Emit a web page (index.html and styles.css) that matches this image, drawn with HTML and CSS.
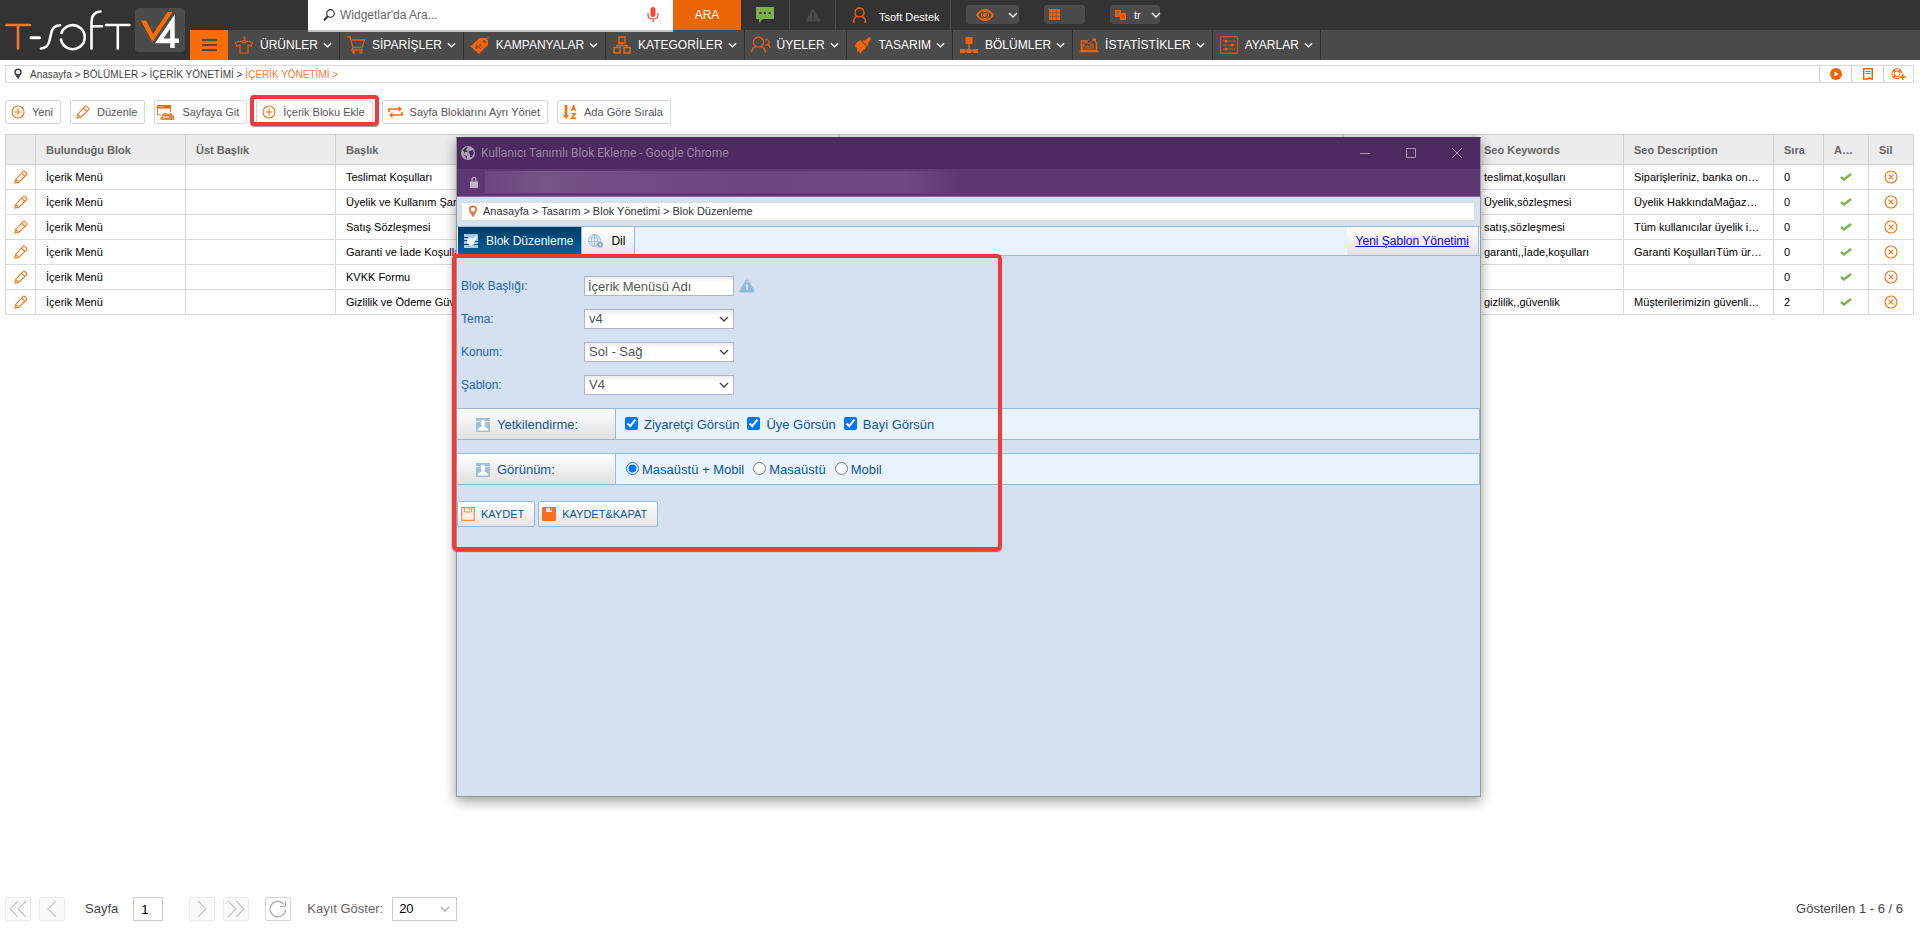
FILE: index.html
```html
<!DOCTYPE html>
<html lang="tr">
<head>
<meta charset="utf-8">
<title>İçerik Yönetimi</title>
<link rel="stylesheet" href="styles.css">
</head>
<body>
<svg class="sprite" aria-hidden="true">
  <symbol id="chev" viewBox="0 0 10 6"><path d="M1 1l4 4 4-4" fill="none" stroke="currentColor" stroke-width="1.4"/></symbol>
  <symbol id="pencil" viewBox="0 0 14 14"><path d="M1 13l.6-3.6L9 1.6q1-1 2 0l1.400 1.400q1 1 0 2L4.600 12.400zM7.500 3.200l3.300 3.300M1.700 9.400l2.900 3" fill="none" stroke="#f57a20" stroke-width="1.100"/></symbol>
  <symbol id="plus" viewBox="0 0 14 14"><circle cx="7" cy="7" r="6" fill="none" stroke="#f57a20" stroke-width="1.200"/><path d="M7 3.500v7M3.500 7h7" stroke="#f57a20" stroke-width="1.200"/></symbol>
  <symbol id="check" viewBox="0 0 12 8"><path d="M1 4l3 2.500L11 1" fill="none" stroke="#7fb24c" stroke-width="2.400"/></symbol>
  <symbol id="del" viewBox="0 0 14 14"><circle cx="7" cy="7" r="6" fill="none" stroke="#f57a20" stroke-width="1.200"/><path d="M4.700 4.700l4.600 4.600M9.300 4.700l-4.600 4.600" stroke="#f57a20" stroke-width="1.200"/></symbol>
  <symbol id="pin" viewBox="0 0 10 13"><path d="M5 12.500C3.500 9 1 7 1 4.500a4 4 0 0 1 8 0C9 7 6.500 9 5 12.500z" fill="currentColor"/><circle cx="5" cy="4.500" r="2.200" fill="#fff"/></symbol>
  <symbol id="person" viewBox="0 0 14 14"><path d="M0 0h14v14H0z" fill="#9dc0dd"/><path d="M7 1.500a2.500 3 0 0 1 2.200 4.200c-.4 1-.8 1.400-.8 2.300 0 1.200 3.800 1.200 4.100 4.500h-11C1.800 9.200 5.600 9.200 5.600 8c0-.9-.4-1.300-.8-2.300A2.500 3 0 0 1 7 1.500z" fill="#fff"/><path d="M0 3.500h3.500M10.500 3.500H14" stroke="#fff"/></symbol>
</svg>

<header class="header">
  <a class="logo" href="#" aria-label="T-Soft V4">
    <svg width="190" height="60" viewBox="0 0 190 60">
      <g fill="none" stroke-width="2.600" stroke-linecap="round" stroke-linejoin="round">
        <path d="M6.500 25h23.500M18 25v23.500" stroke="#f37632"/>
        <path d="M31 37.700h8.500" stroke="#fff" stroke-width="3"/>
        <path d="M41 48.500c5.500-.5 7.500-3 8.500-8l1.500-6.500c1-6 4-8.500 9-8.700" stroke="#fff"/>
        <path d="M61.500 33a12 12 0 1 1-.5 6.500" stroke="#fff"/>
        <path d="M91.500 48.500V22c0-6.500 3.500-10 9-10.500M91.500 26.200h10.500M106 25h23.500M117.800 25v23.500" stroke="#fff"/>
      </g>
      <rect x="135" y="8" width="50" height="44" rx="4" fill="#4b4b4b"/>
      <path d="M141 20.500h5l7 13.500 14.500-22h5L152.500 42z" fill="#ff6c00"/>
      <path d="M155 43.300l19.700-28.800V38.500h4.300v4.500h-4.300V48h-4.500v-4.700zM163.500 38.500h6.700V28.500z" fill="#fff"/>
    </svg>
  </a>
  <div class="bars">
    <div class="topbar">
      <form class="search">
        <svg width="12" height="12" viewBox="0 0 12 12"><circle cx="7.500" cy="4.500" r="3.800" fill="none" stroke="#333" stroke-width="1.200"/><path d="M4.800 7.300L1 11.200" stroke="#333" stroke-width="2"/></svg>
        <input type="text" placeholder="Widgetlar'da Ara..." aria-label="Widget ara">
        <svg width="12" height="16" viewBox="0 0 12 16"><rect x="3.500" y="0" width="5" height="10" rx="2.500" fill="#ef4b3f"/><path d="M1 6v2q0 4 5 4t5-4V6M6 12v3" fill="none" stroke="#ef4b3f" stroke-width="1.200"/></svg>
      </form>
      <button class="go" type="button">ARA</button>
      <a class="cell chat" href="#" aria-label="Mesajlar"><svg width="18" height="16" viewBox="0 0 18 16"><path d="M0 0h18v12H7l-4 4v-4H0z" fill="#7eae4b"/><path d="M3.500 5h2v2h-2zM8 5h2v2H8zM12.500 5h2v2h-2z" fill="#333"/></svg></a>
      <a class="cell warn" href="#" aria-label="Uyarılar"><svg width="16" height="14" viewBox="0 0 16 14"><path d="M8 1l7 12H1z" fill="#4b4b4b" stroke="#4b4b4b" stroke-linejoin="round"/><path d="M8 4.500v4.500M8 10v2" stroke="#333" stroke-width="1.800"/></svg></a>
      <a class="cell user" href="#"><svg width="15" height="16" viewBox="0 0 15 16"><path d="M7.500 1a4.500 4.500 0 0 1 2.200 8.400c2 .6 3.800 1.800 3.900 5.600h-1.500M7.500 1a4.500 4.500 0 0 0-2.200 8.400C3.300 10 1.500 11.200 1.400 15h1.500M5.300 9.400q2.200 1 4.400 0" fill="none" stroke="#e8591a" stroke-width="1.400"/></svg><span>Tsoft Destek</span></a>
      <div class="chips">
        <button class="chip eye" type="button" aria-label="Görünüm"><svg width="18" height="12" viewBox="0 0 18 12"><path d="M1 6q8-10.500 16 0-8 10.500-16 0z" fill="none" stroke="#ec6608" stroke-width="1.800"/><circle cx="9" cy="6" r="3.700" fill="none" stroke="#ec6608"/><circle cx="9" cy="6" r="2" fill="#ec6608"/></svg><svg width="10" height="6"><use href="#chev"/></svg></button>
        <button class="chip apps" type="button" aria-label="Uygulamalar"><svg width="11" height="11" viewBox="0 0 11 11"><path d="M0 0h11v11H0z" fill="#ec6608"/><path d="M3.700 0v11M7.300 0v11M0 3.700h11M0 7.300h11" stroke="#4b4b4b" stroke-width=".5"/></svg></button>
        <button class="chip lang" type="button"><svg width="11" height="10" viewBox="0 0 11 10"><path d="M0 0h6v3h5v7H5V7H0z" fill="#ec6608"/><path d="M1.500 1.500h3M3 1.500v3.500M1.500 5h2M7 8.500v-3h2v3M7 7h2" stroke="#8f4a1c" stroke-width=".7" fill="none"/></svg><span>tr</span><svg width="10" height="6"><use href="#chev"/></svg></button>
      </div>
    </div>
    <nav class="nav">
      <button class="burger" type="button" aria-label="Menü"><i></i><i></i><i></i></button>
      <a href="#"><svg width="20" height="18" viewBox="0 0 20 18"><path d="M10 4.500q-.2-1 .7-1.500.8-.8 0-1.600-.9-.6-1.600.3M10 4.500L1.500 6.500l1 3.500L6 9.500V17h8V9.500l3.500.5 1-3.500zM7.500 5.500q2.500 3 5 0" fill="none" stroke="#e8591a" stroke-width="1.200"/></svg><span>ÜRÜNLER</span><svg class="chev"><use href="#chev"/></svg></a>
      <a href="#"><svg width="20" height="18" viewBox="0 0 20 18"><path d="M1 1h3l3 10.500h9L18.500 4H5M7 11.500L6 14h11" fill="none" stroke="#e8591a" stroke-width="1.300"/><circle cx="7.500" cy="16.300" r="1.600" fill="#e8591a"/><circle cx="15" cy="16.300" r="1.600" fill="#e8591a"/></svg><span>SİPARİŞLER</span><svg class="chev"><use href="#chev"/></svg></a>
      <a href="#"><svg width="20" height="18" viewBox="0 0 20 18"><path d="M9.500 2H16l2 2v5l-9 9-8.500-7.500z" fill="#ec6608"/><path d="M6 9l5 4" stroke="#8a4a22" fill="none"/><circle cx="6.500" cy="11.500" r="1.200" fill="#8a4a22"/><circle cx="10" cy="9.500" r="1.200" fill="#8a4a22"/><circle cx="14.500" cy="5.500" r="1.400" fill="#4b4b4b"/><path d="M14.500 5.500L18.500 1" stroke="#ec6608" fill="none"/></svg><span>KAMPANYALAR</span><svg class="chev"><use href="#chev"/></svg></a>
      <a href="#"><svg width="20" height="18" viewBox="0 0 20 18"><path d="M7 1h6v6H7zM2 11.500h6V17H2zM12 11.500h6V17h-6zM10 7v2.500M5 11.500v-2h10v2" fill="none" stroke="#ec6608" stroke-width="1.500"/></svg><span>KATEGORİLER</span><svg class="chev"><use href="#chev"/></svg></a>
      <a href="#"><svg width="20" height="18" viewBox="0 0 20 18"><path d="M5 10.500a5 5 0 1 1 5 0c2.500.7 4.200 2 4.500 6M5 10.500C2.500 11.200 1 12.500.7 16.500M5 10.500q2.500 1.200 5 0M14 4a2.500 2.500 0 0 1 2.600 4.700c1.400.4 2.200 1.300 2.200 3.300M16.600 8.700l-2.100.5" fill="none" stroke="#e8591a" stroke-width="1.300"/></svg><span>ÜYELER</span><svg class="chev"><use href="#chev"/></svg></a>
      <a href="#"><svg width="20" height="18" viewBox="0 0 20 18"><path d="M3 7l5-3 6 6-2 3-2 1-3 4-1-3-2 1 .5-4L2 11z" fill="#ec6608"/><path d="M9 5l4-1 3-3 2.500 2-3 3.500-1 4z" fill="#ec6608"/><path d="M8 4.500l6 6" stroke="#4b4b4b"/></svg><span>TASARIM</span><svg class="chev"><use href="#chev"/></svg></a>
      <a href="#"><svg width="20" height="18" viewBox="0 0 20 18"><rect x="6.500" y="1" width="7" height="7" rx="1" fill="#ec6608"/><path d="M10 8v7M2 15h16" stroke="#ec6608" stroke-width="1.500"/><path d="M1 13h5v4H1zM7.500 13h5v4h-5zM14 13h5v4h-5z" fill="#ec6608"/></svg><span>BÖLÜMLER</span><svg class="chev"><use href="#chev"/></svg></a>
      <a href="#"><svg width="20" height="18" viewBox="0 0 20 18"><path d="M9 5H2.500v9.500h15V6M.500 15.500h19" fill="none" stroke="#ec6608" stroke-width="1.500"/><path d="M4 13V9h2v4M8 13v-3h2v3M12 13V8h2v5M4 8l3-2 3 2 5-4.500" fill="none" stroke="#e8591a"/><path d="M12.500 2.500H17V7z" fill="#ec6608"/></svg><span>İSTATİSTİKLER</span><svg class="chev"><use href="#chev"/></svg></a>
      <a href="#"><svg width="20" height="18" viewBox="0 0 20 18"><rect x="1.500" y=".7" width="17" height="16.600" rx="1" fill="none" stroke="#c9502a" stroke-width="1.400"/><path d="M4 5h12M4 9h12M4 13h12" stroke="#c9502a"/><circle cx="7" cy="5" r="1.600" fill="#e8591a"/><circle cx="13" cy="9" r="1.600" fill="#e8591a"/><circle cx="7" cy="13" r="1.600" fill="#e8591a"/></svg><span>AYARLAR</span><svg class="chev"><use href="#chev"/></svg></a>
    </nav>
  </div>
</header>

<main class="page">
  <div class="crumbs">
    <svg class="crumb-pin" width="10" height="12"><use href="#pin"/></svg>
    <p><a href="#">Anasayfa</a> &gt; <a href="#">BÖLÜMLER</a> &gt; <a href="#">İÇERİK YÖNETİMİ</a> &gt; <a class="current" href="#">İÇERİK YÖNETİMİ &gt;</a></p>
    <a class="tool" href="#" aria-label="Video"><svg width="12" height="12" viewBox="0 0 12 12"><circle cx="6" cy="6" r="6" fill="#ec6608"/><path d="M4.500 3.500L8.500 6l-4 2.500z" fill="#fff"/></svg></a>
    <a class="tool" href="#" aria-label="Doküman"><svg width="10" height="12" viewBox="0 0 10 12"><path d="M.700.700h8.600v10.300H8L6.500 9.500 5 11H.700z" fill="none" stroke="#ec6608" stroke-width="1.400"/><path d="M2.500 3.500h5M2.500 5.500h5" stroke="#ec6608"/></svg></a>
    <a class="tool" href="#" aria-label="Destek"><svg width="15" height="12" viewBox="0 0 15 12"><circle cx="6" cy="5.700" r="5" fill="none" stroke="#ec6608"/><circle cx="6" cy="5.700" r="2.800" fill="none" stroke="#ec6608"/><path d="M2.200 2l1.800 1.800M9.800 2L8 3.800M2.200 9.500L4 7.700" stroke="#ec6608" stroke-width="2"/><path d="M11.500 5.500v6.500M8.500 8.800h6.500" stroke="#fff" stroke-width="3"/><path d="M11.800 6v6M8.800 9h6" stroke="#ec6608" stroke-width="1.300"/></svg></a>
  </div>

  <div class="toolbar">
    <button type="button"><svg width="14" height="14"><use href="#plus"/></svg>Yeni</button>
    <button type="button"><svg width="14" height="14"><use href="#pencil"/></svg>Düzenle</button>
    <button class="goto" type="button"><svg width="18" height="17" viewBox="0 0 18 17"><path d="M0 1h14v3.500H0z" fill="#ec6608"/><path d="M1.500 2.700h1M3.500 2.700h1M5.500 2.700h1" stroke="#fff"/><path d="M.500 4v7H4M13.500 4v4" stroke="#f57a20" fill="none"/><path d="M4 12q3-5 7-2l3-1 3 3v4H7q-4 0-4-2 1-1.500 3-1z" fill="#f0833a"/><path d="M6 13h6" stroke="#fff"/></svg>Sayfaya Git</button>
    <button class="marked" type="button"><svg width="14" height="14"><use href="#plus"/></svg>İçerik Bloku Ekle</button>
    <button type="button"><svg width="15" height="12" viewBox="0 0 15 12"><path d="M1 6V3h10M14 6v3H4" fill="none" stroke="#ff6c00" stroke-width="1.700"/><path d="M10.500 0l3.500 3-3.500 3zM4.500 6L1 9l3.500 3z" fill="#ff6c00"/></svg>Sayfa Bloklarını Ayrı Yönet</button>
    <button type="button"><svg width="14" height="14" viewBox="0 0 14 14"><path d="M3 0v11" stroke="#ff6c00" stroke-width="2.600"/><path d="M0 10h6l-3 4z" fill="#ff6c00"/><path d="M8.500 6l2-5.500 2 5.500M9 4.200h3M8.500 8.700h4l-4 4.600h4.500" fill="none" stroke="#ff6c00" stroke-width="1.400"/></svg>Ada Göre Sırala</button>
  </div>

  <table class="list">
    <colgroup><col class="c-edit"><col class="c-text"><col class="c-text"><col class="c-wide"><col class="c-wide"><col class="c-seo"><col class="c-text"><col class="c-text"><col class="c-no"><col class="c-icon"><col class="c-icon"></colgroup>
    <thead><tr><th></th><th>Bulunduğu Blok</th><th>Üst Başlık</th><th>Başlık</th><th></th><th></th><th>Seo Keywords</th><th>Seo Description</th><th>Sıra</th><th>A…</th><th>Sil</th></tr></thead>
    <tbody>
      <tr><td><svg width="14" height="14"><use href="#pencil"/></svg></td><td>İçerik Menü</td><td></td><td>Teslimat Koşulları</td><td></td><td></td><td>teslimat,koşulları</td><td>Siparişleriniz, banka on…</td><td>0</td><td><svg width="12" height="8"><use href="#check"/></svg></td><td><svg width="14" height="14"><use href="#del"/></svg></td></tr>
      <tr><td><svg width="14" height="14"><use href="#pencil"/></svg></td><td>İçerik Menü</td><td></td><td>Üyelik ve Kullanım Şartları</td><td></td><td></td><td>Üyelik,sözleşmesi</td><td>Üyelik HakkındaMağaz…</td><td>0</td><td><svg width="12" height="8"><use href="#check"/></svg></td><td><svg width="14" height="14"><use href="#del"/></svg></td></tr>
      <tr><td><svg width="14" height="14"><use href="#pencil"/></svg></td><td>İçerik Menü</td><td></td><td>Satış Sözleşmesi</td><td></td><td></td><td>satış,sözleşmesi</td><td>Tüm kullanıcılar üyelik i…</td><td>0</td><td><svg width="12" height="8"><use href="#check"/></svg></td><td><svg width="14" height="14"><use href="#del"/></svg></td></tr>
      <tr><td><svg width="14" height="14"><use href="#pencil"/></svg></td><td>İçerik Menü</td><td></td><td>Garanti ve İade Koşulları</td><td></td><td></td><td>garanti,,İade,koşulları</td><td>Garanti KoşullarıTüm ür…</td><td>0</td><td><svg width="12" height="8"><use href="#check"/></svg></td><td><svg width="14" height="14"><use href="#del"/></svg></td></tr>
      <tr><td><svg width="14" height="14"><use href="#pencil"/></svg></td><td>İçerik Menü</td><td></td><td>KVKK Formu</td><td></td><td></td><td></td><td></td><td>0</td><td><svg width="12" height="8"><use href="#check"/></svg></td><td><svg width="14" height="14"><use href="#del"/></svg></td></tr>
      <tr><td><svg width="14" height="14"><use href="#pencil"/></svg></td><td>İçerik Menü</td><td></td><td>Gizlilik ve Ödeme Güvenliği</td><td></td><td></td><td>gizlilik,,güvenlik</td><td>Müşterilerimizin güvenli…</td><td>2</td><td><svg width="12" height="8"><use href="#check"/></svg></td><td><svg width="14" height="14"><use href="#del"/></svg></td></tr>
    </tbody>
  </table>
</main>

<footer class="pager">
  <button class="off" type="button" aria-label="İlk"><svg width="18" height="18" viewBox="0 0 18 18"><path d="M9 1L1 9l8 8M17 1L9 9l8 8"/></svg></button>
  <button class="off" type="button" aria-label="Önceki"><svg width="18" height="18" viewBox="0 0 18 18"><path d="M13 1L5 9l8 8"/></svg></button>
  <label class="pageno">Sayfa <input type="text" value="1"></label>
  <button class="off" type="button" aria-label="Sonraki"><svg width="18" height="18" viewBox="0 0 18 18"><path d="M5 1l8 8-8 8"/></svg></button>
  <button class="off" type="button" aria-label="Son"><svg width="18" height="18" viewBox="0 0 18 18"><path d="M1 1l8 8-8 8M9 1l8 8-8 8"/></svg></button>
  <button class="reload" type="button" aria-label="Yenile"><svg width="18" height="18" viewBox="0 0 18 18"><path d="M16.500 9.500A7.700 7.700 0 1 1 15 4.500M16.500 1v5.500H11"/></svg></button>
  <label class="perpage">Kayıt Göster: <span class="pick"><select><option>20</option></select><svg width="10" height="6"><use href="#chev"/></svg></span></label>
  <p class="total">Gösterilen 1 - 6 / 6</p>
</footer>

<section class="window" aria-label="Blok Ekleme">
  <div class="titlebar">
    <svg width="14" height="14" viewBox="0 0 14 14"><circle cx="7" cy="7" r="7" fill="#a9a3b0"/><path d="M2 4q2-3 5-3L5 4l2 2H4v2zM8 5l4-1 1 3-2 4H9V8L7.500 7zM3 9l3 1v3z" fill="#4e2a62"/></svg>
    <h1>Kullanıcı Tanımlı Blok Ekleme - Google Chrome</h1>
    <button type="button" aria-label="Simge"><svg width="10" height="10" viewBox="0 0 10 10"><path d="M0 5.500h10"/></svg></button>
    <button type="button" aria-label="Büyüt"><svg width="10" height="10" viewBox="0 0 10 10"><path d="M.500.500h9v9h-9z"/></svg></button>
    <button type="button" aria-label="Kapat"><svg width="10" height="10" viewBox="0 0 10 10"><path d="M0 0l10 10M10 0L0 10"/></svg></button>
  </div>
  <div class="address">
    <svg width="8" height="11" viewBox="0 0 8 11"><path d="M0 4.500h8V11H0z" fill="#bdb6c4"/><path d="M2 5V2.500a2 2 0 0 1 4 0V5" fill="none" stroke="#bdb6c4" stroke-width="1.200"/></svg>
    <div class="url"></div>
  </div>
  <div class="path"><svg width="10" height="13"><use href="#pin"/></svg><p>Anasayfa &gt; Tasarım &gt; Blok Yönetimi &gt; Blok Düzenleme</p></div>
  <div class="tabs">
    <button class="tab active" type="button"><svg width="14" height="14" viewBox="0 0 14 14"><path d="M0 0h14v14H0z" fill="#a9c8e2"/><path d="M0 3.500h4M0 6.500h3M0 10.500h14M11 7.500h3" stroke="#00447a"/><path d="M3 5.500l4-2 1.500 1.500L12 2l1.500 1.500L10.500 7v3L7 12 3.500 9z" fill="#fff"/></svg>Blok Düzenleme</button>
    <button class="tab" type="button"><svg width="16" height="14" viewBox="0 0 16 14"><g fill="none" stroke="#9dc0dd"><circle cx="6.500" cy="6.500" r="6"/><ellipse cx="6.500" cy="6.500" rx="3" ry="6"/><path d="M6.500.500v12M1 4h11M.500 7.500h10"/></g><circle cx="12" cy="10.500" r="3.300" fill="#f2f2f2"/><circle cx="12" cy="10.500" r="2.200" fill="none" stroke="#84add0" stroke-width="1.800"/></svg>Dil</button>
    <div class="tab-link"><a href="#">Yeni Şablon Yönetimi</a></div>
  </div>
  <form class="form">
    <div class="fields">
      <label for="t">Blok Başlığı:</label>
      <div class="ctl"><input id="t" type="text" value="İçerik Menüsü Adı"><svg width="16" height="14" viewBox="0 0 16 14"><path d="M8 2l6 10H2z" fill="#93b9da" stroke="#93b9da" stroke-width="3" stroke-linejoin="round"/><path d="M8 5v6M8 2.500v1.300" stroke="#d4e1f0" stroke-width="2"/></svg></div>
      <label for="m">Tema:</label>
      <div class="ctl pick"><select id="m"><option>v4</option></select><svg width="10" height="6"><use href="#chev"/></svg></div>
      <label for="k">Konum:</label>
      <div class="ctl pick"><select id="k"><option>Sol - Sağ</option></select><svg width="10" height="6"><use href="#chev"/></svg></div>
      <label for="s">Şablon:</label>
      <div class="ctl pick"><select id="s"><option>V4</option></select><svg width="10" height="6"><use href="#chev"/></svg></div>
    </div>
    <div class="band" role="group" aria-labelledby="g1">
      <div class="band-head" id="g1"><svg width="14" height="14"><use href="#person"/></svg>Yetkilendirme:</div>
      <div class="band-body checks">
        <label><input type="checkbox" checked>Ziyaretçi Görsün</label>
        <label><input type="checkbox" checked>Üye Görsün</label>
        <label><input type="checkbox" checked>Bayi Görsün</label>
      </div>
    </div>
    <div class="band" role="group" aria-labelledby="g2">
      <div class="band-head" id="g2"><svg width="14" height="14"><use href="#person"/></svg>Görünüm:</div>
      <div class="band-body radios">
        <label><input type="radio" name="v" checked>Masaüstü + Mobil</label>
        <label><input type="radio" name="v">Masaüstü</label>
        <label><input type="radio" name="v">Mobil</label>
      </div>
    </div>
    <div class="actions">
      <button type="button"><svg width="14" height="14" viewBox="0 0 14 14"><path d="M.700.700h12.600v12.600H.700z" fill="#fbeee6" stroke="#f0905a" stroke-width="1.200"/><path d="M3.500 1v4h7V1M8.500 1.500v2" fill="none" stroke="#f0905a"/></svg>KAYDET</button>
      <button type="button"><svg width="14" height="14" viewBox="0 0 14 14"><rect width="14" height="14" rx="1" fill="#f46f20"/><path d="M4 1h6v4H4z" fill="#fde3d3"/><path d="M8 1h1.500v2.500H8z" fill="#f46f20"/></svg>KAYDET&amp;KAPAT</button>
    </div>
  </form>
  <div class="focus-box"></div>
</section>
</body>
</html>
```
FILE: styles.css
```css
* { box-sizing: border-box; }
body {
  margin: 0;
  min-height: 100vh;
  display: flex;
  flex-direction: column;
  position: relative;
  background: #fff;
  color: #000;
  font: 11px/14px "Liberation Sans", Arial, sans-serif;
}
p, h1 { margin: 0; }
a { color: inherit; text-decoration: none; }
button, input, select { font: inherit; color: inherit; margin: 0; padding: 0; border: 0; background: none; border-radius: 0; }
svg { display: block; flex: none; }
.sprite { position: absolute; width: 0; height: 0; }

/* header */
.header { display: flex; background: #333; color: #fff; }
.bars { flex: 1; }
.topbar { display: flex; height: 30px; padding-left: 118px; }
.search {
  position: relative;
  display: flex;
  align-items: center;
  width: 365px;
  height: 32px;
  padding: 0 14px 0 15px;
  background: #fff;
  border-bottom: 2px solid #c4c4c4;
}
.search input { flex: 1; margin-left: 5px; font-size: 12px; outline: 0; }
.search input::placeholder { color: #666; }
.go { width: 68px; background: #ec6608; font-size: 12px; }
.cell { display: flex; align-items: center; border-right: 1px solid #4b4b4b; }
.chat { width: 49px; padding-left: 15px; }
.warn { width: 46px; padding-left: 15px; }
.user { width: 115px; padding-left: 16px; }
.user span { margin: 4px 0 0 12px; }
.chips { display: flex; padding-top: 5px; }
.chip { display: flex; align-items: center; height: 19px; border-radius: 3px; background: #4b4b4b; }
.eye { width: 53px; margin-left: 15px; padding: 0 1px 0 10px; justify-content: space-between; }
.apps { width: 41px; margin-left: 25px; padding-left: 5px; }
.lang { width: 50px; margin-left: 25px; padding-left: 5px; }
.lang span { margin: 0 10px 0 8px; }
.nav { display: flex; height: 30px; background: #4b4b4b; }
.burger {
  width: 38px;
  display: flex;
  flex-direction: column;
  align-items: center;
  justify-content: center;
  gap: 3px;
  background: #ff6c00;
}
.burger i { width: 15px; height: 2px; background: #4b4b4b; }
.nav a { display: flex; align-items: center; padding: 0 7px 0 6px; border-right: 1px solid #333; font-size: 12px; }
.nav a span { margin: 0 5px 0 6px; }
.chev { width: 9px; height: 6px; }

/* breadcrumb and toolbar */
.page { flex: 1; padding: 5px 6px 0 5px; }
.crumbs { display: flex; align-items: stretch; height: 18px; border: 1px solid #d9d9d9; font-size: 10px; line-height: 17px; color: #444; }
.crumb-pin { margin: 2px 7px 0; color: #444; }
.crumbs p { flex: 1; }
.current { color: #f37a3a; }
.tool { display: flex; align-items: center; justify-content: center; width: 32px; border-left: 1px solid #d0d0d0; }
.tool:last-child { width: 30px; }
.toolbar { display: flex; gap: 9px; padding: 17px 0 10px; }
.toolbar button {
  position: relative;
  display: flex;
  align-items: center;
  gap: 7px;
  height: 24px;
  padding: 0 7px 0 5px;
  border: 1px solid #d9d9d9;
  border-radius: 2px;
  color: #555;
}
.toolbar .goto { padding-left: 2px; }
.marked::after {
  content: "";
  position: absolute;
  inset: -6px -7px -3px;
  border: 4px solid #f13b3b;
  border-radius: 4px;
  box-shadow: 0 1px 1px #999;
}

/* records */
.list { width: 100%; table-layout: fixed; border-collapse: collapse; }
.c-edit { width: 30px; }
.c-text { width: 150px; }
.c-seo { width: 130px; }
.c-no { width: 50px; }
.c-icon { width: 45px; }
.list th, .list td { padding: 0 0 0 10px; border: 1px solid #d9d9d9; text-align: left; white-space: nowrap; overflow: hidden; }
.list th { height: 30px; background: #ececec; color: #666; border-color: #d0d0d0; }
.list td { height: 25px; }
.list td:first-child { padding-left: 8px; }
.list td:nth-last-child(-n+2) { padding: 0; }
.list td:nth-last-child(-n+2) svg { margin: 0 auto; }

/* pager */
.pager { display: flex; align-items: center; padding: 0 17px 16px 5px; font-size: 13px; color: #444; }
.pager button { display: flex; align-items: center; justify-content: center; width: 26px; height: 24px; margin-right: 8px; border: 1px solid #ddd; border-radius: 2px; }
.pager button svg { fill: none; stroke: #c6c6c6; stroke-width: 1.2; }
.pager .off { border-color: #eaeaea; background: #fafafa; }
.pager .reload { margin: 0 16px 0 8px; border-color: #d4d4d4; }
.pager .reload svg { stroke: #aaa; }
.pageno { display: flex; align-items: center; gap: 15px; margin: 0 26px 0 12px; }
.pageno input { width: 30px; height: 24px; padding-left: 7px; border: 1px solid #ccc; color: #000; }
.perpage { display: flex; align-items: center; gap: 9px; color: #666; }
.pick { position: relative; }
.pick select { appearance: none; }
.pick svg { position: absolute; right: 7px; top: 50%; margin-top: -3px; pointer-events: none; }
.perpage .pick { color: #aaa; }
.perpage select { width: 65px; height: 24px; padding-left: 6px; border: 1px solid #ccc; color: #000; display: block; }
.total { margin-left: auto; }

/* popup window */
.window {
  position: absolute;
  left: 456px;
  top: 137px;
  width: 1025px;
  height: 660px;
  border: 1px solid #999;
  border-top-color: #4a3a55;
  background: #d4e1f0;
  box-shadow: 0 4px 12px rgba(0, 0, 0, .4);
}
.titlebar { display: flex; align-items: center; height: 31px; padding: 0 13px 2px 4px; background: #4e2a62; }
.titlebar h1 { flex: 1; margin-left: 6px; font: 12px/16px "Noto Sans", sans-serif; font-family: Roboto, "Noto Sans", sans-serif; color: #9a84a6; }
.titlebar button { display: flex; justify-content: center; width: 20px; margin-left: 26px; }
.titlebar button svg { fill: none; stroke: #a692b2; }
.address { display: flex; align-items: center; height: 28px; padding: 0 0 1px 13px; background: #5d3872; border-bottom: 1px solid #9a66b3; }
.url { width: 475px; height: 22px; margin-left: 7px; background: linear-gradient(90deg, #6b477f, #75548a 12%, #6b457f 55%, #6e4a83 88%, #5d3872); }
.path { display: flex; align-items: center; height: 19px; margin: 5px 5px 5px 4px; padding: 0 0 2px 6px; background: #fff; border: 1px solid #dcdcdc; color: #333; }
.path svg { margin: 1px 5px 0 0; color: #f37032; }
.tabs { display: flex; height: 30px; padding: 0 1px; background: #e8f3fd; border: solid #95bbdb; border-width: 1px 0; color: #000; }
.tab { display: flex; align-items: center; gap: 7px; padding: 0 9px 0 6px; border-right: 1px solid #95bbdb; background: linear-gradient(#fff, #e6e6e6); font-size: 12px; }
.tab.active { gap: 8px; padding-right: 8px; background: linear-gradient(#003a66, #00619f); color: #fff; }
.tab-link { margin-left: auto; padding: 0 9px; background: linear-gradient(#fff, #e2e2e2); font-size: 12px; line-height: 28px; border-right: 1px solid #95bbdb; }
.tab-link a { color: #00e; text-decoration: underline; }
.fields { display: grid; grid-template-columns: 123px 1fr; gap: 13px 0; padding: 20px 4px 13px; align-items: center; font-size: 12px; color: #2466a5; }
.fields label { line-height: 20px; }
.ctl { display: flex; height: 20px; font-size: 13px; color: #555; }
.ctl input, .ctl select { width: 150px; height: 20px; border: 1px solid #b0b3cc; background: linear-gradient(#eee, #fff 6px); }
.ctl input { padding-left: 3px; }
.ctl select { padding-left: 4px; color: #555; }
.ctl > input + svg { margin: 3px 0 0 5px; }
.ctl.pick { width: 150px; color: #444; }
.ctl.pick svg { right: 5px; }
.band { display: grid; grid-template-columns: 158px 1fr; height: 32px; margin-bottom: 13px; background: #e8f3fd; border: 1px solid #95bbdb; border-left: 0; font-size: 13px; color: #0f5694; }
.band-head { display: flex; align-items: center; gap: 7px; padding: 1px 0 0 19px; background: linear-gradient(#fff, #e0e0e0); }
.band-body { display: flex; align-items: center; padding: 2px 0 0 9px; border-left: 1px solid #95bbdb; }
.band-body label { display: flex; align-items: center; margin-right: 8px; }
.band-body input { width: 13px; height: 13px; margin: 0 6px 4px 0; }
.radios { padding-left: 10px; }
.radios label { margin-right: 9px; }
.radios input { margin-right: 3px; }
.actions { display: flex; gap: 3px; padding-top: 3px; }
.actions button { display: flex; align-items: center; gap: 6px; height: 26px; padding: 0 10px 0 3px; border: 1px solid #95bbdb; border-radius: 2px; background: linear-gradient(#fff, #e4e4e4); color: #0f5694; }
.focus-box { position: absolute; left: -5px; top: 116px; width: 550px; height: 297px; border: 4px solid #f13b3b; border-radius: 5px; pointer-events: none; box-shadow: 0 1px 1px #777; }
```
